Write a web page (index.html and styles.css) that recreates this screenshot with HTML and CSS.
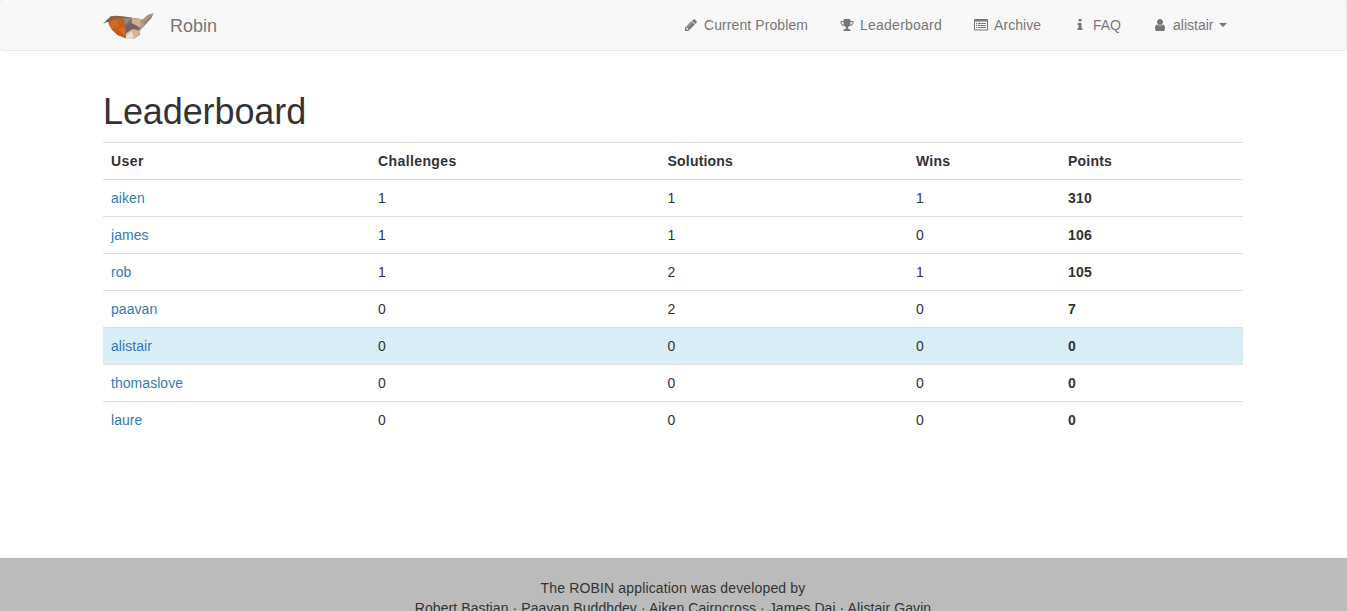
FILE: index.html
```html
<!DOCTYPE html>
<html lang="en">
<head>
<meta charset="utf-8">
<title>Robin - Leaderboard</title>
<link rel="stylesheet" href="styles.css">
</head>
<body>
<nav class="navbar">
  <div class="container navbar-inner">
    <a class="brand" href="#">
      <svg class="logo" viewBox="0 0 192 120" aria-hidden="true">
        <path fill="#8d7264" d="M28 47L38 37L62 36L102 41L130 45L140 64L124 82L127 92L106 104L84 103L60 93L42 78L33 62z"/>
        <path fill="#3f625c" d="M15 60L29 46L37 51L24 55z"/>
        <path fill="#94613f" d="M28 47L38 38L50 35L64 36L78 43L54 46L38 54z"/>
        <path fill="#cf6a22" d="M34 53L54 44L80 64L58 78L42 76L33 62z"/>
        <path fill="#bd6124" d="M54 44L74 43L82 66L64 68z"/>
        <path fill="#c65b14" d="M40 75L62 69L82 65L84 103L58 93z"/>
        <path fill="#d56b24" d="M60 76L80 65L83 98z"/>
        <path fill="#81695f" d="M62 36L90 39L102 42L98 58L82 66L74 43z"/>
        <path fill="#998579" d="M76 43L102 42L82 64z"/>
        <path fill="#746267" d="M82 66L101 56L130 72L103 76L84 90z"/>
        <path fill="#cbb091" d="M102 42L130 46L136 56L128 72L101 57z"/>
        <path fill="#b59b80" d="M128 48L142 54L140 65L122 82L127 68z"/>
        <path fill="#d3b58e" d="M84 88L104 75L124 80L126 93L106 104L84 103z"/>
        <path fill="#e8ddd7" d="M84 95L101 82L108 101L98 105L84 103z"/>
        <path fill="#ad9184" d="M128 51L150 32L168 27L160 42L140 64z"/>
        <path fill="#947a74" d="M139 55L164 34L158 44L140 64z"/>
      </svg>
      <span class="brand-name">Robin</span>
    </a>
    <div class="nav">
      <a class="nav-link nav-problem" href="#"><svg class="icon" viewBox="0 0 1792 1792"><path d="M491 1536l91-91-235-235-91 91v107h128v128h107zm523-928q0-22-22-22-10 0-17 7l-542 542q-7 7-7 17 0 22 22 22 10 0 17-7l542-542q7-7 7-17zm-54-192l416 416-832 832h-416v-416zm683 96q0 53-37 90l-166 166-416-416 166-165q36-38 90-38 53 0 91 38l235 234q37 39 37 91z"/></svg>Current Problem</a>
      <a class="nav-link nav-leaderboard" href="#"><svg class="icon" viewBox="0 0 1792 1792"><path d="M522 883q-74-162-74-371h-256v96q0 78 94.5 162t235.5 113zm1078-275v-96h-256q0 209-74 371 141-29 235.5-113t94.5-162zm128-128v128q0 71-41.5 143t-112 130-173 97.5-215.5 44.5q-42 54-95 95-38 34-52.5 72.5t-14.5 89.5q0 54 30.5 91t97.5 37q75 0 133.5 45.5t58.5 114.5v64q0 14-9 23t-23 9h-832q-14 0-23-9t-9-23v-64q0-69 58.5-114.5t133.5-45.5q67 0 97.5-37t30.5-91q0-51-14.5-89.5t-52.5-72.5q-53-41-95-95-113-5-215.5-44.5t-173-97.5-112-130-41.5-143v-128q0-40 28-68t68-28h288v-96q0-66 47-113t113-47h576q66 0 113 47t47 113v96h288q40 0 68 28t28 68z"/></svg>Leaderboard</a>
      <a class="nav-link nav-archive" href="#"><svg class="icon" viewBox="0 0 14 14"><path fill-rule="evenodd" d="M1 1H13Q14 1 14 2V11.500Q14 12.500 13 12.500H1Q0 12.500 0 11.500V2Q0 1 1 1zM1 3.500V11.500H13V3.500zM2 5H3V6H2zM4 5H12V6H4zM2 7H3V8H2zM4 7H12V8H4zM2 9H3V10H2zM4 9H12V10H4z"/></svg>Archive</a>
      <a class="nav-link nav-faq" href="#"><svg class="icon" viewBox="0 0 1792 1792"><path d="M1216 1344v128q0 26-19 45t-45 19h-512q-26 0-45-19t-19-45v-128q0-26 19-45t45-19h64v-384h-64q-26 0-45-19t-19-45v-128q0-26 19-45t45-19h384q26 0 45 19t19 45v576h64q26 0 45 19t19 45zm-128-1152v192q0 26-19 45t-45 19h-256q-26 0-45-19t-19-45v-192q0-26 19-45t45-19h256q26 0 45 19t19 45z"/></svg>FAQ</a>
      <a class="nav-link nav-user" href="#"><svg class="icon" viewBox="0 0 1792 1792"><path d="M1536 1399q0 109-62.5 187t-150.5 78h-854q-88 0-150.500-78t-62.500-187q0-85 8.500-160.500t31.500-152 58.500-131 94-89 134.500-34.500q131 128 313 128t313-128q76 0 134.500 34.500t94 89 58.500 131 31.500 152 8.500 160.500zm-256-887q0 159-112.500 271.500t-271.500 112.500-271.500-112.500-112.500-271.500 112.500-271.500 271.500-112.500 271.500 112.500 112.500 271.500z"/></svg>alistair<span class="caret"></span></a>
    </div>
  </div>
</nav>
<main class="container main">
  <h1 class="title">Leaderboard</h1>
  <table class="table">
    <colgroup><col class="col-user"><col class="col-challenges"><col class="col-solutions"><col class="col-wins"><col></colgroup>
    <thead><tr><th>User</th><th>Challenges</th><th>Solutions</th><th>Wins</th><th>Points</th></tr></thead>
    <tbody>
      <tr><td><a href="#">aiken</a></td><td>1</td><td>1</td><td>1</td><th>310</th></tr>
      <tr><td><a href="#">james</a></td><td>1</td><td>1</td><td>0</td><th>106</th></tr>
      <tr><td><a href="#">rob</a></td><td>1</td><td>2</td><td>1</td><th>105</th></tr>
      <tr><td><a href="#">paavan</a></td><td>0</td><td>2</td><td>0</td><th>7</th></tr>
      <tr class="current"><td><a href="#">alistair</a></td><td>0</td><td>0</td><td>0</td><th>0</th></tr>
      <tr><td><a href="#">thomaslove</a></td><td>0</td><td>0</td><td>0</td><th>0</th></tr>
      <tr><td><a href="#">laure</a></td><td>0</td><td>0</td><td>0</td><th>0</th></tr>
    </tbody>
  </table>
</main>
<footer class="footer">
  <div class="footer-lead">The ROBIN application was developed by</div>
  <div class="footer-names">Robert Bastian · Paavan Buddhdev · Aiken Cairncross · James Dai · Alistair Gavin</div>
</footer>
</body>
</html>
```
FILE: styles.css
```css
* { box-sizing: border-box; }
html { overflow: hidden; }
body {
  margin: -1px 0 0 -1px;
  height: 612px;
  overflow: hidden;
  font: 14px/20px "Liberation Sans", Arial, sans-serif;
  color: #333;
  background: #fff;
}
a { color: #337ab7; text-decoration: none; }
.container { width: 1170px; margin: 0 auto; padding: 0 15px; }
.navbar {
  height: 52px;
  border: 1px solid #e7e7e7;
  border-radius: 4px;
  background: #f8f8f8;
}
.navbar-inner { display: flex; justify-content: space-between; }
.brand { display: flex; align-items: center; height: 50px; color: #777; font-size: 18px; }
.logo { width: 64px; height: 40px; margin: -2px 0 0 -5px; }
.brand-name { margin: 2px 0 0 8px; }
.nav { display: flex; }
.nav-link { display: flex; align-items: center; height: 50px; padding: 0 15px; color: #777; white-space: nowrap; }
.nav-problem { width: 156px; letter-spacing: 0.09px; }
.nav-leaderboard { width: 133px; letter-spacing: 0.24px; }
.nav-archive { width: 99px; letter-spacing: 0.07px; }
.nav-faq { width: 80px; }
.nav-user { width: 107px; }
.icon { flex: none; width: 14px; height: 14px; margin: 0 6px 0 2px; fill: currentColor; }
.nav-problem .icon { margin: 0 6px 0 1px; }
.nav-leaderboard .icon { margin: 0 6px 0 1px; }
.caret { margin-left: 6px; border-top: 4px solid; border-right: 4px solid transparent; border-left: 4px solid transparent; }
.main { height: 507px; padding-top: 41px; }
.title { margin: 0 0 10px; height: 40px; font-size: 36px; font-weight: 500; line-height: 40px; letter-spacing: -0.1px; }
.table { width: 1140px; table-layout: fixed; border-collapse: collapse; }
.table th, .table td { height: 37px; padding: 8px; border-top: 1px solid #ddd; text-align: left; vertical-align: top; }
.table th { letter-spacing: 0.2px; }
.table thead th:nth-child(-n+2) { letter-spacing: 0.4px; }
.table td a { letter-spacing: 0.05px; }
.table tr > :nth-child(3) { padding-left: 7.5px; }
.col-user { width: 267px; }
.col-challenges { width: 290px; }
.col-solutions { width: 248px; }
.col-wins { width: 152px; }
.current { background: #d9edf7; }
.footer { height: 54px; padding-top: 20px; background: #bbb; text-align: center; white-space: nowrap; }
.footer-lead { letter-spacing: 0.15px; }
.footer-names { letter-spacing: 0.085px; }
```
